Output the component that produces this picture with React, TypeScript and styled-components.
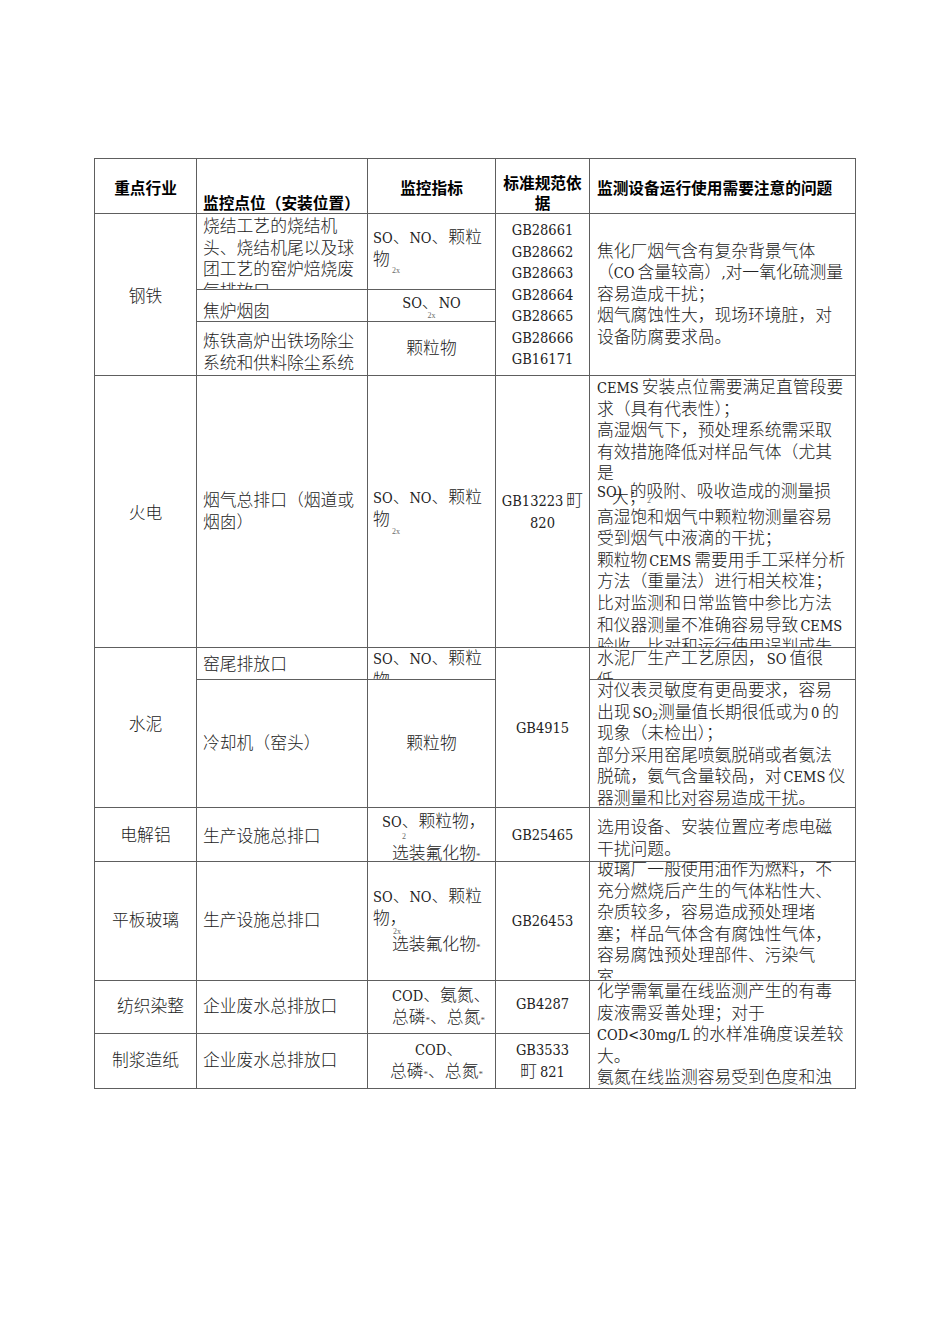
import React from 'react';
import styled, { createGlobalStyle } from 'styled-components';

const GlobalStyle = createGlobalStyle`
  html, body { margin: 0; padding: 0; background: #ffffff; }
  body {
    font-family: "Liberation Serif", "Noto Sans CJK SC", serif;
    color: #1e1e1e;
  }
`;

const Page = styled.div`
  width: 950px;
  min-height: 1344px;
  box-sizing: border-box;
  padding: 158px 0 0 94px;
`;

const Table = styled.div`
  display: grid;
  width: max-content;
  grid-template-columns: 101px 170px 127px 93px 265px;
  grid-template-rows: 54px 75px 31px 53px 271px 31px 127px 53px 118px 52px 54px;
  gap: 1px;
  background: #5e5e5e;
  border: 1px solid #5e5e5e;
`;

type VAlign = 'start' | 'center' | 'end';

const Cell = styled.div<{
  $col: string;
  $row: string;
  $v?: VAlign;
  $h?: 'start' | 'center';
  $pl?: number;
  $pt?: number;
  $pb?: number;
}>`
  grid-column: ${(p) => p.$col};
  grid-row: ${(p) => p.$row};
  background: #ffffff;
  overflow: hidden;
  display: flex;
  flex-direction: column;
  justify-content: ${(p) =>
    p.$v === 'start' ? 'flex-start' : p.$v === 'end' ? 'flex-end' : 'safe center'};
  align-items: ${(p) => (p.$h === 'center' ? 'center' : 'flex-start')};
  padding: ${(p) => p.$pt ?? 0}px 0 ${(p) => p.$pb ?? 0}px ${(p) => p.$pl ?? 0}px;
  font-size: 16.8px;
  font-weight: 300;
  line-height: 21.6px;
  color: #222;
`;

const HeadCell = styled(Cell)`
  font-family: "Noto Sans CJK SC", "Liberation Sans", sans-serif;
  font-weight: 700;
  font-size: 15.7px;
  line-height: 20px;
  color: #000;
`;

const Line = styled.div<{ $indent?: number; $mt?: number }>`
  white-space: nowrap;
  padding-left: ${(p) => p.$indent ?? 0}px;
  margin-top: ${(p) => p.$mt ?? 0}px;
`;

/* Latin runs: the source renders them narrow, at half the width of a CJK glyph */
const Lat = styled.span<{ $l?: number; $r?: number }>`
  font-family: "DejaVu Serif Condensed", "DejaVu Serif", "Liberation Serif", serif;
  font-stretch: condensed;
  font-weight: 400;
  font-size: 14.5px;
  line-height: 0;
  padding: 0 ${(p) => p.$r ?? 0}px 0 ${(p) => p.$l ?? 0}px;
`;

const OverlapLine = styled.div`
  position: relative;
  white-space: nowrap;
  margin-top: -4px;
  margin-bottom: 4px;
`;

const Overlay = styled.span<{ $x: number; $y: number; $small?: boolean }>`
  position: absolute;
  left: ${(p) => p.$x}px;
  top: ${(p) => p.$y}px;
  font-size: ${(p) => (p.$small ? '8px' : 'inherit')};
  line-height: ${(p) => (p.$small ? '8px' : 'inherit')};
  color: ${(p) => (p.$small ? '#6a6a6a' : 'inherit')};
`;

const Sub = styled.div<{ $ml?: number; $mt?: number }>`
  font-size: 8px;
  line-height: 8px;
  color: #6a6a6a;
  margin-left: ${(p) => p.$ml ?? 0}px;
  margin-top: ${(p) => p.$mt ?? 0}px;
  white-space: nowrap;
`;

const SubScript = styled.span`
  font-size: 10px;
  vertical-align: -2px;
  line-height: 0;
`;

const Star = styled.span`
  font-size: 9px;
  line-height: 0;
  color: #555;
`;

export default function App() {
  return (
    <>
      <GlobalStyle />
      <Page>
        <Table>
          {/* header */}
          <HeadCell $col="1" $row="1" $h="center" $pt={4}>
            <Line>重点行业</Line>
          </HeadCell>
          <HeadCell $col="2" $row="1" $v="end" $pl={6}>
            <Line>监控点位（安装位置）</Line>
          </HeadCell>
          <HeadCell $col="3" $row="1" $h="center" $pt={4}>
            <Line>监控指标</Line>
          </HeadCell>
          <HeadCell $col="4" $row="1" $v="start" $h="center" $pt={14}>
            <Line>标准规范依</Line>
            <Line>据</Line>
          </HeadCell>
          <HeadCell $col="5" $row="1" $pl={7} $pt={4}>
            <Line>监测设备运行使用需要注意的问题</Line>
          </HeadCell>

          {/* 钢铁 */}
          <Cell $col="1" $row="2 / 5" $h="center" $pt={4}>
            <Line>钢铁</Line>
          </Cell>
          <Cell $col="2" $row="2" $v="start" $pl={6} $pt={2}>
            <Line>烧结工艺的烧结机</Line>
            <Line>头、烧结机尾以及球</Line>
            <Line>团工艺的窑炉焙烧废</Line>
            <Line>气排放口</Line>
          </Cell>
          <Cell $col="3" $row="2" $v="start" $pl={5} $pt={13}>
            <Line><Lat>SO</Lat>、<Lat>NO</Lat>、颗粒</Line>
            <Line>物</Line>
            <Sub $ml={19} $mt={-3}>2x</Sub>
          </Cell>
          <Cell $col="2" $row="3" $v="start" $pl={6} $pt={11}>
            <Line>焦炉烟囱</Line>
          </Cell>
          <Cell $col="3" $row="3" $v="start" $h="center" $pt={2}>
            <Line><Lat>SO</Lat>、<Lat>NO</Lat></Line>
            <Sub $mt={-2}>2x</Sub>
          </Cell>
          <Cell $col="2" $row="4" $v="start" $pl={6} $pt={9}>
            <Line>炼铁高炉出铁场除尘</Line>
            <Line>系统和供料除尘系统</Line>
          </Cell>
          <Cell $col="3" $row="4" $h="center">
            <Line>颗粒物</Line>
          </Cell>
          <Cell $col="4" $row="2 / 5" $h="center">
            <Line><Lat>GB28661</Lat></Line>
            <Line><Lat>GB28662</Lat></Line>
            <Line><Lat>GB28663</Lat></Line>
            <Line><Lat>GB28664</Lat></Line>
            <Line><Lat>GB28665</Lat></Line>
            <Line><Lat>GB28666</Lat></Line>
            <Line><Lat>GB16171</Lat></Line>
          </Cell>
          <Cell $col="5" $row="2 / 5" $pl={7}>
            <Line>焦化厂烟气含有复杂背景气体</Line>
            <Line>（<Lat $r={3}>CO</Lat>含量较高）<Lat>,</Lat>对一氧化硫测量</Line>
            <Line>容易造成干扰；</Line>
            <Line>烟气腐蚀性大，现场环境脏，对</Line>
            <Line>设备防腐要求咼。</Line>
          </Cell>

          {/* 火电 */}
          <Cell $col="1" $row="5" $h="center" $pt={4}>
            <Line>火电</Line>
          </Cell>
          <Cell $col="2" $row="5" $pl={6}>
            <Line>烟气总排口（烟道或</Line>
            <Line>烟囱）</Line>
          </Cell>
          <Cell $col="3" $row="5" $pl={5}>
            <Line><Lat>SO</Lat>、<Lat>NO</Lat>、颗粒</Line>
            <Line>物</Line>
            <Sub $ml={19} $mt={-3}>2x</Sub>
          </Cell>
          <Cell $col="4" $row="5" $h="center">
            <Line><Lat $r={3}>GB13223</Lat>町</Line>
            <Line><Lat>820</Lat></Line>
          </Cell>
          <Cell $col="5" $row="5" $v="start" $pl={7} $pt={1}>
            <Line><Lat $r={3}>CEMS</Lat>安装点位需要满足直管段要</Line>
            <Line>求（具有代表性）；</Line>
            <Line>高湿烟气下，预处理系统需采取</Line>
            <Line>有效措施降低对样品气体（尤其</Line>
            <Line>是</Line>
            <OverlapLine>
              <Lat $r={8}>SO)</Lat>的吸附、吸收造成的测量损
              <Overlay $x={15} $y={6}>大；</Overlay>
              <Overlay $x={50} $y={16} $small>2</Overlay>
            </OverlapLine>
            <Line>高湿饱和烟气中颗粒物测量容易</Line>
            <Line>受到烟气中液滴的干扰；</Line>
            <Line>颗粒物<Lat $l={2} $r={3}>CEMS</Lat>需要用手工采样分析</Line>
            <Line>方法（重量法）进行相关校准；</Line>
            <Line>比对监测和日常监管中参比方法</Line>
            <Line>和仪器测量不准确容易导致<Lat $l={2}>CEMS</Lat></Line>
            <Line>验收、比对和运行使用误判或失</Line>
          </Cell>

          {/* 水泥 */}
          <Cell $col="1" $row="6 / 8" $h="center" $pb={6}>
            <Line>水泥</Line>
          </Cell>
          <Cell $col="2" $row="6" $v="start" $pl={6} $pt={6}>
            <Line>窑尾排放口</Line>
          </Cell>
          <Cell $col="3" $row="6" $v="start" $pl={5}>
            <Line><Lat>SO</Lat>、<Lat>NO</Lat>、颗粒</Line>
            <Line>物</Line>
          </Cell>
          <Cell $col="2" $row="7" $pl={6}>
            <Line>冷却机（窑头）</Line>
          </Cell>
          <Cell $col="3" $row="7" $h="center">
            <Line>颗粒物</Line>
          </Cell>
          <Cell $col="4" $row="6 / 8" $h="center">
            <Line><Lat>GB4915</Lat></Line>
          </Cell>
          <Cell $col="5" $row="6" $v="start" $pl={7}>
            <Line>水泥厂生产工艺原因，<Lat $l={2} $r={3}>SO</Lat>值很</Line>
            <Line>低</Line>
          </Cell>
          <Cell $col="5" $row="7" $v="start" $pl={7}>
            <Line>对仪表灵敏度有更咼要求，容易</Line>
            <Line>
              出现<Lat $l={2}>SO<SubScript>2</SubScript></Lat>测量值长期很低或为<Lat $l={2} $r={3}>0</Lat>的
            </Line>
            <Line>现象（未检出）；</Line>
            <Line>部分采用窑尾喷氨脱硝或者氨法</Line>
            <Line>脱硫，氨气含量较咼，对<Lat $l={2} $r={3}>CEMS</Lat>仪</Line>
            <Line>器测量和比对容易造成干扰。</Line>
          </Cell>

          {/* 电解铝 */}
          <Cell $col="1" $row="8" $h="center" $pt={2}>
            <Line>电解铝</Line>
          </Cell>
          <Cell $col="2" $row="8" $pl={6} $pt={4}>
            <Line>生产设施总排口</Line>
          </Cell>
          <Cell $col="3" $row="8" $v="start" $pl={14} $pt={3}>
            <Line><Lat>SO</Lat>、颗粒物，</Line>
            <Sub $ml={20}>2</Sub>
            <Line $indent={10} $mt={2}>
              选装氟化物<Star>*</Star>
            </Line>
          </Cell>
          <Cell $col="4" $row="8" $h="center">
            <Line><Lat>GB25465</Lat></Line>
          </Cell>
          <Cell $col="5" $row="8" $v="start" $pl={7} $pt={9}>
            <Line>选用设备、安装位置应考虑电磁</Line>
            <Line>干扰问题。</Line>
          </Cell>

          {/* 平板玻璃 */}
          <Cell $col="1" $row="9" $h="center">
            <Line>平板玻璃</Line>
          </Cell>
          <Cell $col="2" $row="9" $pl={6}>
            <Line>生产设施总排口</Line>
          </Cell>
          <Cell $col="3" $row="9" $v="start" $pl={5} $pt={24}>
            <Line><Lat>SO</Lat>、<Lat>NO</Lat>、颗粒</Line>
            <Line>物，</Line>
            <Sub $ml={20} $mt={-1}>2x</Sub>
            <Line $indent={19} $mt={-2}>
              选装氟化物<Star>*</Star>
            </Line>
          </Cell>
          <Cell $col="4" $row="9" $h="center">
            <Line><Lat>GB26453</Lat></Line>
          </Cell>
          <Cell $col="5" $row="9" $v="start" $pl={7}>
            <Line $mt={-3}>玻璃厂一般使用油作为燃料，不</Line>
            <Line>充分燃烧后产生的气体粘性大、</Line>
            <Line>杂质较多，容易造成预处理堵</Line>
            <Line>塞；样品气体含有腐蚀性气体，</Line>
            <Line>容易腐蚀预处理部件、污染气</Line>
            <Line>室</Line>
          </Cell>

          {/* 纺织染整 */}
          <Cell $col="1" $row="10" $h="center" $pl={10}>
            <Line>纺织染整</Line>
          </Cell>
          <Cell $col="2" $row="10" $pl={6}>
            <Line>企业废水总排放口</Line>
          </Cell>
          <Cell $col="3" $row="10" $pl={24}>
            <Line><Lat>COD</Lat>、氨氮、</Line>
            <Line>
              总磷<Star>*</Star>、总氮<Star>*</Star>
            </Line>
          </Cell>
          <Cell $col="4" $row="10" $h="center" $pb={6}>
            <Line><Lat>GB4287</Lat></Line>
          </Cell>
          <Cell $col="5" $row="10 / 12" $v="start" $pl={7}>
            <Line>化学需氧量在线监测产生的有毒</Line>
            <Line>废液需妥善处理；对于</Line>
            <Line><Lat $r={3}>COD&lt;30mg/L</Lat>的水样准确度误差较</Line>
            <Line>大。</Line>
            <Line>氨氮在线监测容易受到色度和浊</Line>
          </Cell>

          {/* 制浆造纸 */}
          <Cell $col="1" $row="11" $h="center">
            <Line>制浆造纸</Line>
          </Cell>
          <Cell $col="2" $row="11" $pl={6}>
            <Line>企业废水总排放口</Line>
          </Cell>
          <Cell $col="3" $row="11" $pl={22}>
            <Line $indent={25}><Lat>COD</Lat>、</Line>
            <Line>
              总磷<Star>*</Star>、总氮<Star>*</Star>
            </Line>
          </Cell>
          <Cell $col="4" $row="11" $h="center">
            <Line><Lat>GB3533</Lat></Line>
            <Line>町<Lat $l={3}>821</Lat></Line>
          </Cell>
        </Table>
      </Page>
    </>
  );
}
